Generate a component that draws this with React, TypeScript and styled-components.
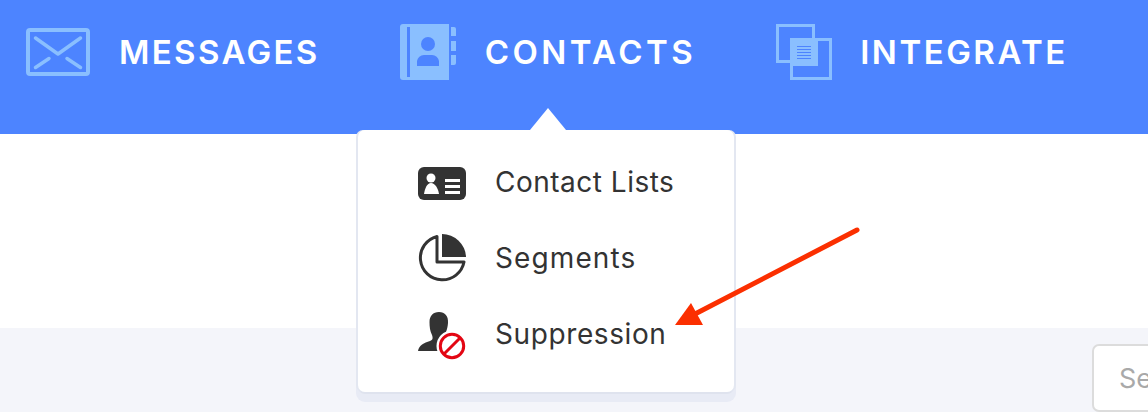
import React from "react";
import styled, { createGlobalStyle } from "styled-components";

const Global = createGlobalStyle`
  html, body { margin: 0; padding: 0; background: #fff; overflow: hidden; }
  body { font-family: "Inter", "Liberation Sans", sans-serif; }
  * { box-sizing: border-box; }
`;

const Page = styled.div`
  position: relative;
  width: 1148px;
  height: 412px;
  overflow: hidden;
  display: flex;
  flex-direction: column;
`;

const Header = styled.header`
  height: 134px;
  flex: none;
  background: #4d84ff;
  padding: 24px 0 0 26px;
  display: flex;
  align-items: flex-start;
  gap: 80px;
`;

const NavItem = styled.a<{ $gap: number; $spacing: number }>`
  display: flex;
  align-items: center;
  height: 56px;
  gap: ${(p) => p.$gap}px;
  color: #fff;
  font-size: 33px;
  font-weight: 600;
  letter-spacing: ${(p) => p.$spacing}px;
  line-height: 56px;
  white-space: nowrap;
`;

const NavIcon = styled.svg`
  display: block;
  flex: none;
`;

const WhiteBand = styled.div`
  height: 194px;
  flex: none;
  background: #fff;
`;

const Lower = styled.div`
  flex: 1;
  background: #f4f5fa;
  padding: 16px 0 0 1092px;
`;

const SearchBox = styled.input`
  width: 240px;
  height: 68px;
  border: 2px solid #dcdcdc;
  border-radius: 7px;
  background: #fff;
  padding: 0 0 0 25px;
  font: 400 27px "Inter", "Liberation Sans", sans-serif;
  outline: none;
  &::placeholder { color: #a9a9a9; opacity: 1; }
`;

const Menu = styled.nav`
  position: absolute;
  left: 358px;
  top: 130px;
  width: 376px;
  height: 262px;
  background: #fff;
  border-radius: 7px;
  box-shadow: -2px 0 0 #e3e7f1, 2px 0 0 #e3e7f1, 0 2px 0 #dfe3ee, 0 8px 0 2px #e8ebf5;
  padding: 14px 0 20px 60px;
  display: flex;
  flex-direction: column;
  &::before {
    content: "";
    position: absolute;
    left: 172px;
    top: -22px;
    width: 36px;
    height: 22px;
    background: #fff;
    clip-path: polygon(50% 0, 100% 100%, 0 100%);
  }
`;

const MenuRow = styled.a<{ $spacing: number }>`
  height: 76px;
  display: flex;
  align-items: center;
  gap: 29px;
  color: #333;
  font-size: 28px;
  font-weight: 400;
  letter-spacing: ${(p) => p.$spacing}px;
  white-space: nowrap;
`;

const MenuIcon = styled.svg`
  display: block;
  flex: none;
`;

const Annotation = styled.svg`
  position: absolute;
  left: 670px;
  top: 225px;
`;

const EnvelopeIcon = () => (
  <NavIcon width="64" height="56" viewBox="0 0 64 56" fill="none" stroke="#8abfff" strokeWidth="4" strokeLinecap="round" strokeLinejoin="round">
    <rect x="2" y="6" width="60" height="44" rx="2" />
    <path d="M9.500 14 L32 30 L54.500 14" strokeWidth="3.500" />
    <path d="M9.500 43.500 L23 34.500 M41 34.500 L54.500 43.500" strokeWidth="3.500" />
  </NavIcon>
);

const BookIcon = () => (
  <NavIcon width="57" height="56" viewBox="0 0 57 56">
    <path d="M3 0 H49 V56 H3 A3 3 0 0 1 0 53 V3 A3 3 0 0 1 3 0 Z" fill="#8abfff" />
    <rect x="7" y="3" width="3" height="50" fill="#4d84ff" />
    <circle cx="28" cy="20" r="7" fill="#4d84ff" />
    <path d="M17 42 V37 A7 7 0 0 1 24 31 H32 A7 7 0 0 1 39 37 V42 Z" fill="#4d84ff" />
    <path d="M51 3 H54 A2 2 0 0 1 56 5 V12 H51 Z M51 17 H56 V27 H51 Z M51 31 H56 V39 A2 2 0 0 1 54 41 H51 Z" fill="#8abfff" />
  </NavIcon>
);

const LayersIcon = () => (
  <NavIcon width="56" height="56" viewBox="0 0 56 56">
    <rect x="1.500" y="1.500" width="36" height="36" fill="none" stroke="#8abfff" strokeWidth="3" />
    <rect x="15.500" y="15.500" width="39" height="39" fill="none" stroke="#8abfff" strokeWidth="3" />
    <rect x="14" y="14" width="28" height="28" fill="#8abfff" />
    <path d="M21 22.500 H35 M21 25.500 H35 M21 28.500 H35 M21 31.500 H35 M21 34.500 H35" stroke="#4d84ff" strokeWidth="1.200" />
  </NavIcon>
);

const CardIcon = () => (
  <MenuIcon width="48" height="48" viewBox="0 0 48 48">
    <rect x="0" y="9" width="48" height="33" rx="6" fill="#333" />
    <circle cx="13" cy="20" r="4.500" fill="#fff" />
    <path d="M6 36 C7 30 9 25 13 25 C17 25 20 30 21 36 Z" fill="#fff" />
    <path d="M27 21 H42 V24 H27 Z M27 27 H42 V30 H27 Z M27 33 H42 V36 H27 Z" fill="#fff" />
  </MenuIcon>
);

const PieIcon = () => (
  <MenuIcon width="48" height="48" viewBox="0 0 48 48">
    <path d="M19 2.500 A22 22 0 1 0 46 28 H19 Z" fill="none" stroke="#333" strokeWidth="3" strokeLinejoin="round" />
    <path d="M24 0 A24 24 0 0 1 48 23 H24 Z" fill="#333" />
  </MenuIcon>
);

const BlockedUserIcon = () => (
  <MenuIcon width="48" height="52" viewBox="0 -4 48 52">
    <path d="M21 0 C27 0 30.500 4 30 11 C29.500 18 27 22 26 25 L26 39 H0 C1 33 6 31 12 29 C15 28 15 26 14 23 C12 19 11.500 15 11.500 10 C11.500 4 15 0 21 0 Z" fill="#333" />
    <circle cx="34" cy="34" r="15.500" fill="#fff" />
    <circle cx="34" cy="34" r="11.700" fill="#fff" stroke="#e30613" strokeWidth="3" />
    <path d="M26 42 L42 26" stroke="#e30613" strokeWidth="3" />
  </MenuIcon>
);

export default function App() {
  return (
    <Page>
      <Global />
      <Header>
        <NavItem $gap={29} $spacing={2.35}><EnvelopeIcon />MESSAGES</NavItem>
        <NavItem $gap={28} $spacing={3.45}><BookIcon />CONTACTS</NavItem>
        <NavItem $gap={28} $spacing={2.5}><LayersIcon />INTEGRATE</NavItem>
      </Header>
      <WhiteBand />
      <Lower>
        <SearchBox placeholder="Search" readOnly />
      </Lower>
      <Menu>
        <MenuRow $spacing={0.5}><CardIcon />Contact Lists</MenuRow>
        <MenuRow $spacing={1.1}><PieIcon />Segments</MenuRow>
        <MenuRow $spacing={0.6}><BlockedUserIcon />Suppression</MenuRow>
      </Menu>
      <Annotation width="195" height="105" viewBox="670 225 195 105">
        <path d="M857 230 L695 314" stroke="#fb2f00" strokeWidth="5" strokeLinecap="round" fill="none" />
        <path d="M675 325 L691 303 L703 325 Z" fill="#fb2f00" />
      </Annotation>
    </Page>
  );
}
